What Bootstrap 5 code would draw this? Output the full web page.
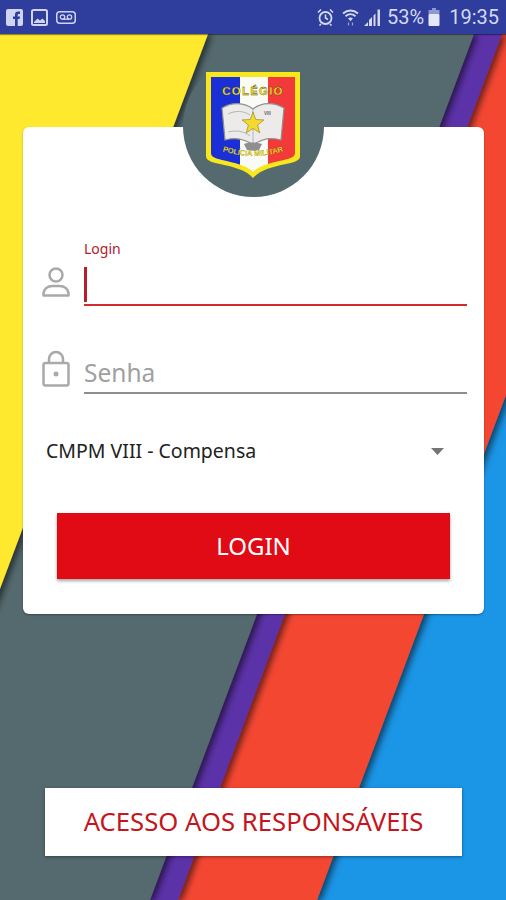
<!DOCTYPE html>
<html lang="pt">
<head>
  <meta charset="UTF-8" />
  <meta name="viewport" content="width=device-width, initial-scale=1" />
  <title>Login</title>
  <link href="https://cdn.jsdelivr.net/npm/bootstrap@5.3.0/dist/css/bootstrap.min.css" rel="stylesheet" />
  <style>
    html, body { height: 900px; overflow: hidden; }
    body { position: relative; background: #1b95e6; font-family: "Noto Sans", sans-serif; }
    .bg-art { position: absolute; left: 0; top: 34px; width: 506px; height: 866px; }
    .status-bar { position: relative; height: 34px; background: #2f3d9d; color: #d3d9f2; font-family: Roboto, sans-serif; font-size: 20px; padding: 0 7px 0 6px; box-shadow: 0 1px 1px rgba(0,0,0,.4); }
    .status-bar svg { display: block; }
    .login-area { position: relative; padding: 93px 22px 0 23px; }
    .login-card { position: relative; height: 487px; background: #fff; border-radius: 6px; padding: 113px 17px 0 19px; box-shadow: 0 1px 2px rgba(0,0,0,.35); }
    .logo-disc { position: absolute; left: 160px; top: -71px; width: 141px; height: 141px; border-radius: 50%; background: #546a6e; }
    .logo-shield { position: absolute; left: 23px; top: 16px; width: 94px; height: 106px; }
    .field-icon { width: 28px; flex: none; margin-right: 14px; }
    .icon-user { margin-top: 27px; }
    .icon-lock { margin-top: -2px; }
    .field-label { display: block; height: 17px; margin: 0; font-size: 14px; line-height: 17px; color: #b3202c; }
    .field-input { height: 49px; padding: 0; border: 0; border-bottom: 2px solid #d22b30; border-radius: 0; background: transparent; font-size: 24.5px; color: #333; }
    .field-input.senha { height: 42px; border-bottom: 2px solid #8d8d8d; }
    .field-input::placeholder { color: #a0a0a0; opacity: 1; }
    .field-input:focus { border-color: inherit; box-shadow: none; }
    .fake-caret { position: absolute; left: 0; top: 10px; width: 3px; height: 35px; background: #b3202c; }
    .row-senha { margin-top: 46px; }
    .school-select { display: block; margin: 36px 0 0 4px; width: calc(100% - 4px); height: 42px; padding: 0; border: 0; border-radius: 0; font-size: 19.5px; color: #222; background-color: transparent; background-position: right 23px center; background-size: 13px 7px; background-image: url("data:image/svg+xml,%3csvg xmlns='http://www.w3.org/2000/svg' viewBox='0 0 13 7'%3e%3cpath fill='%23757575' d='M0 0h13L6.500 7z'/%3e%3c/svg%3e"); }
    .btn-entrar { display: block; width: 393px; height: 66px; margin: 41px 0 0 15px; border: 0; border-radius: 0; background: #e00b14; color: #fff; font-size: 24px; box-shadow: 0 2px 3px rgba(0,0,0,.35); }
    .btn-responsaveis { display: block; width: 417px; height: 68px; margin: 174px 0 0 22px; border: 0; border-radius: 0; background: #fff; color: #c4161c; font-size: 25.7px; white-space: nowrap; box-shadow: 0 1px 3px rgba(0,0,0,.4); }
  </style>
</head>
<body>

<svg class="bg-art" viewBox="0 34 506 866" aria-hidden="true">
  <defs>
    <filter id="bandShadow" x="-10%" y="-10%" width="120%" height="120%">
      <feDropShadow dx="4" dy="1" stdDeviation="3" flood-color="#000" flood-opacity=".55" />
    </filter>
  </defs>
  <polygon fill="#f44730" filter="url(#bandShadow)" points="-20,34 641,34 317,900 -20,900" />
  <polygon fill="#5c30a8" filter="url(#bandShadow)" points="-20,34 502,34 178,900 -20,900" />
  <polygon fill="#546a6e" filter="url(#bandShadow)" points="-20,34 474,34 150,900 -20,900" />
  <polygon fill="#ffe92e" filter="url(#bandShadow)" points="-20,34 208,34 -8,610 -20,610" />
</svg>

<header class="status-bar d-flex align-items-center">
  <svg width="17" height="17" viewBox="0 0 17 17"><rect width="17" height="17" rx="2" fill="#cfd5f0"/><path fill="#2f3d9d" d="M9 17v-7H7V7.500h2V5.600C9 3.500 10.200 2.500 12 2.500h2v2.600h-1.300c-.8 0-1 .4-1 1v1.400H14L13.600 10h-1.900v7z"/></svg>
  <svg class="ms-2" width="17" height="17" viewBox="0 0 17 17"><rect x="1" y="1" width="15" height="15" rx="1.500" fill="none" stroke="#cfd5f0" stroke-width="2"/><path fill="#cfd5f0" d="M3 13l3.500-3.500 2.500 2 2.500-2L14 12v2H3z"/></svg>
  <svg class="ms-2" width="20" height="13" viewBox="0 0 20 13"><rect x=".75" y=".75" width="18.500" height="11.500" rx="3" fill="none" stroke="#cfd5f0" stroke-width="1.500"/><circle cx="6.500" cy="6" r="2.200" fill="none" stroke="#cfd5f0" stroke-width="1.300"/><circle cx="13.500" cy="6" r="2.200" fill="none" stroke="#cfd5f0" stroke-width="1.300"/><path stroke="#cfd5f0" stroke-width="1.300" d="M6.500 8.200h7"/></svg>
  <div class="ms-auto d-flex align-items-center">
    <svg width="17" height="18" viewBox="0 0 17 18"><circle cx="8.500" cy="10" r="6" fill="none" stroke="#d3d9f2" stroke-width="1.800"/><path d="M8.500 6.500V10l2.500 1.500M1 4.500L4 1.500M16 4.500L13 1.500M4 16l-1.500 1.500M13 16l1.500 1.500" fill="none" stroke="#d3d9f2" stroke-width="1.600"/></svg>
    <svg class="ms-2" width="17" height="18" viewBox="0 0 17 18"><path d="M1 5.500C5.500 1.500 11.500 1.500 16 5.500M3.500 8.200C6.500 5.700 10.500 5.700 13.500 8.200" fill="none" stroke="#d3d9f2" stroke-width="1.800"/><path fill="#d3d9f2" d="M6 10.200c1.600-1 3.400-1 5 0l-2.500 3z"/><path stroke="#9aa3d6" stroke-width="1.200" d="M6.500 14.500v3M10.500 14.500v3"/></svg>
    <svg style="margin-left:5px" width="17" height="17" viewBox="0 0 17 17"><path fill="#d3d9f2" d="M0 17l4-4v4zM5 17v-6l3-3v9zM9.500 17V6.500l2-2V17zM13.500 17V0.500h2.500V17z"/></svg>
    <span style="margin-left:6px">53%</span>
    <svg style="margin-left:4px" width="12" height="18" viewBox="0 0 12 18"><path fill="#8d97d2" d="M4 0h4v2h3.500v4H.5V2H4z"/><rect x=".5" y="6" width="11" height="12" rx="1" fill="#e3e7f7"/></svg>
    <span style="margin-left:9px">19:35</span>
  </div>
</header>

<main class="login-area">
  <form class="login-card">
    <div class="logo-disc">
      <svg class="logo-shield" viewBox="0 0 94 106">
        <path fill="#f8e71c" d="M0 0H94V84C94 88 90 90 80 92 66 95 54 98 47 106 40 98 28 95 14 92 4 90 0 88 0 84Z" />
        <clipPath id="shieldInner"><path d="M5 5H89V81C89 85 85 86 78 88 65 91 54 93 47 100 40 93 29 91 16 88 9 86 5 85 5 81Z" /></clipPath>
        <g clip-path="url(#shieldInner)">
          <rect x="5" y="5" width="29" height="100" fill="#1a2fd6" />
          <rect x="34" y="5" width="28" height="100" fill="#fbfbf6" />
          <rect x="62" y="5" width="27" height="100" fill="#f23a3a" />
        </g>
        <text x="47" y="23" text-anchor="middle" font-family="Liberation Sans, sans-serif" font-size="11.500" font-weight="700" letter-spacing="1.200" fill="#f8e71c" stroke="#44411a" stroke-width=".3">COLÉGIO</text>
        <path fill="#ecebea" stroke="#8f8f8f" stroke-width="1.200" d="M16 36C26 30 38 30 47 37 56 30 68 30 78 36L75 68C65 65 55 67 47 73 39 67 29 65 19 68Z" />
        <path fill="none" stroke="#b5b5b5" d="M47 37V73M22 42C30 38 38 39 44 43M22 60C30 58 38 59 44 64" />
        <path fill="#8f8f8f" d="M38 72c5-2 13-2 18 0l-3 6c-4 1-8 1-12 0z" />
        <path fill="#f4d92e" stroke="#8a7c1a" stroke-width=".6" d="M47 40l2.800 7.500 8.200.4-6.400 5.100 2.200 7.900-6.800-4.500-6.800 4.500 2.200-7.900-6.400-5.100 8.200-.4z" />
        <text x="58" y="43" font-family="Liberation Sans, sans-serif" font-size="4.500" font-weight="700" fill="#666">VIII</text>
        <path id="shieldArc" fill="none" d="M8 76Q47 92 86 76" />
        <text font-family="Liberation Sans, sans-serif" font-size="7.500" font-weight="700" fill="#f8e71c" stroke="#44411a" stroke-width=".15"><textPath href="#shieldArc" startOffset="50%" text-anchor="middle">POLÍCIA MILITAR</textPath></text>
      </svg>
    </div>

    <div class="position-relative d-flex">
      <svg class="field-icon icon-user" height="30" viewBox="0 0 28 30"><circle cx="14" cy="8" r="6.500" fill="none" stroke="#a9a9a9" stroke-width="2.500"/><path d="M1.500 27c0-5 4-8 9-8h7c5 0 9 3 9 8v1.500H1.500z" fill="none" stroke="#a9a9a9" stroke-width="2.500" stroke-linejoin="round"/></svg>
      <div class="flex-grow-1">
        <label class="field-label" for="login">Login</label>
        <div class="position-relative">
          <input id="login" type="text" class="form-control field-input" />
          <span class="fake-caret"></span>
        </div>
      </div>
    </div>

    <div class="d-flex row-senha">
      <svg class="field-icon icon-lock" height="37" viewBox="0 0 28 37"><path d="M7 13V9a7 7 0 0 1 14 0v4" fill="none" stroke="#a9a9a9" stroke-width="2.500"/><rect x="1.500" y="13" width="25" height="22.500" rx="2" fill="none" stroke="#a9a9a9" stroke-width="2.500"/><circle cx="14" cy="24" r="2.500" fill="#a9a9a9"/></svg>
      <input type="password" class="form-control field-input senha flex-grow-1" placeholder="Senha" />
    </div>

    <select class="form-select school-select">
      <option>CMPM VIII - Compensa</option>
    </select>

    <button type="button" class="btn btn-entrar">LOGIN</button>
  </form>

  <button type="button" class="btn btn-responsaveis">ACESSO AOS RESPONSÁVEIS</button>
</main>

<script src="https://cdn.jsdelivr.net/npm/bootstrap@5.3.0/dist/js/bootstrap.bundle.min.js"></script>
</body>
</html>
